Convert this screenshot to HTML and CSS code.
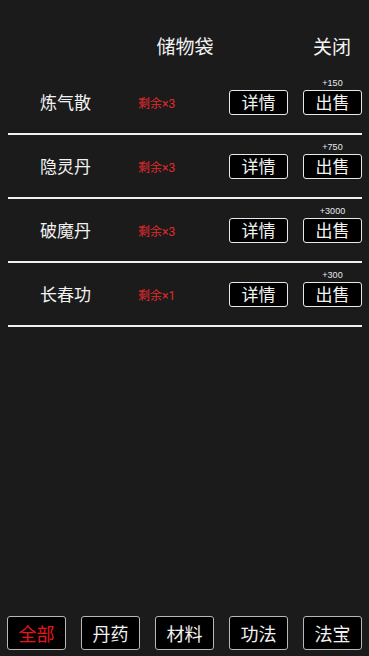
FILE: index.html
```html
<!DOCTYPE html>
<html lang="zh">
<head>
<meta charset="utf-8">
<title>储物袋</title>
<link rel="stylesheet" href="styles.css">
</head>
<body>
<div class="page">
  <header class="header">
    <div class="spacer"></div>
    <div class="title">储物袋</div>
    <div class="close">关闭</div>
  </header>
  <ul class="list">
    <li class="row">
      <span class="name">炼气散</span>
      <span class="left">剩余×3</span>
      <span class="btn detail">详情</span>
      <span class="btn sell">出售<span class="price">+150</span></span>
    </li>
    <li class="row">
      <span class="name">隐灵丹</span>
      <span class="left">剩余×3</span>
      <span class="btn detail">详情</span>
      <span class="btn sell">出售<span class="price">+750</span></span>
    </li>
    <li class="row">
      <span class="name">破魔丹</span>
      <span class="left">剩余×3</span>
      <span class="btn detail">详情</span>
      <span class="btn sell">出售<span class="price">+3000</span></span>
    </li>
    <li class="row">
      <span class="name">长春功</span>
      <span class="left">剩余×1</span>
      <span class="btn detail">详情</span>
      <span class="btn sell">出售<span class="price">+300</span></span>
    </li>
  </ul>
  <nav class="tabs">
    <span class="tab active">全部</span>
    <span class="tab">丹药</span>
    <span class="tab">材料</span>
    <span class="tab">功法</span>
    <span class="tab">法宝</span>
  </nav>
</div>
</body>
</html>
```

FILE: styles.css
```css
* { box-sizing: border-box; }
html, body {
  margin: 0;
  padding: 0;
  background: #1b1b1b;
}
body {
  font-family: "Noto Sans CJK SC", "Noto Sans", sans-serif;
  color: #f2f2f2;
}
.page {
  width: 369px;
  height: 656px;
  display: flex;
  flex-direction: column;
}
.header {
  display: grid;
  grid-template-columns: 1fr auto 1fr;
  align-items: center;
  height: 71px;
  padding-top: 34px;
  padding-bottom: 13px;
}
.title {
  font-size: 19px;
  line-height: 24px;
  text-align: center;
  padding-left: 1px;
}
.close {
  justify-self: end;
  font-size: 19px;
  line-height: 24px;
  padding-right: 18px;
}
.list {
  list-style: none;
  margin: 0;
  padding: 0 7px 0 8px;
  flex: 1;
}
.row {
  display: flex;
  align-items: center;
  height: 64px;
  border-bottom: 2px solid #f0f0f0;
}
.name {
  font-size: 17px;
  width: 130px;
  padding-left: 32px;
  line-height: 24px;
}
.left {
  font-family: "Roboto", "Noto Sans CJK SC", sans-serif;
  font-size: 12px;
  color: #e02a2a;
  width: 91px;
}
.btn {
  position: relative;
  width: 59px;
  height: 25px;
  border: 1px solid #e8e8e8;
  border-radius: 3px;
  background: #000;
  font-size: 17px;
  line-height: 22px;
  text-align: center;
}
.sell {
  margin-left: 15px;
}
.price {
  position: absolute;
  left: 0;
  right: 0;
  top: -13px;
  font-family: "Liberation Sans", sans-serif;
  font-size: 9px;
  line-height: 10px;
  color: #e8e8e8;
  text-align: center;
}
.tabs {
  display: flex;
  gap: 15px;
  padding: 0 7px 6px 7px;
}
.tab {
  width: 59px;
  height: 34px;
  border: 1px solid #b8b8b8;
  border-radius: 3px;
  background: #000;
  font-size: 18px;
  line-height: 32px;
  text-align: center;
  color: #f2f2f2;
}
.tab.active {
  color: #e8141c;
}
```
